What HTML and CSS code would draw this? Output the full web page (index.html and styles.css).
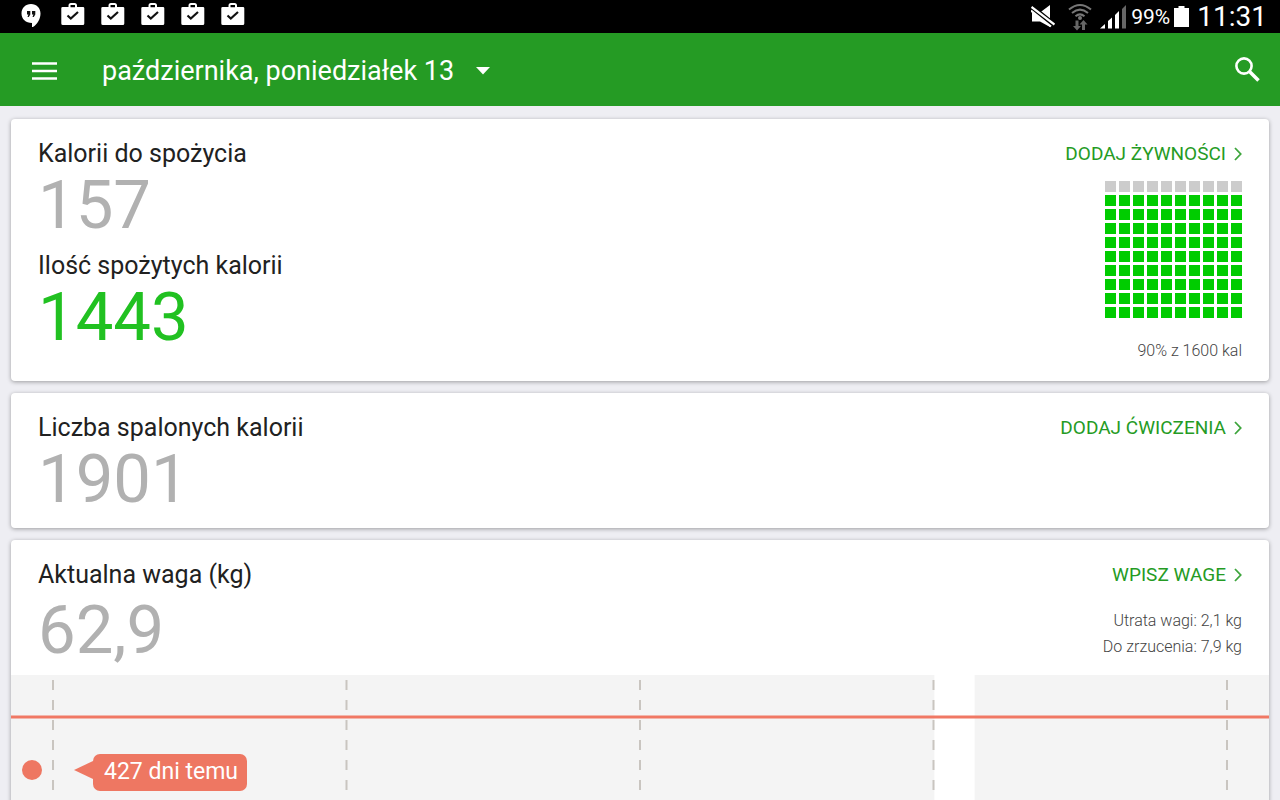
FILE: index.html
```
<!DOCTYPE html>
<html lang="pl">

<head>
    <meta charset="utf-8">
    <meta name="viewport" content="width=device-width, initial-scale=1">
    <title>Dziennik kalorii</title>
    <link rel="stylesheet" href="styles.css">
</head>

<body>
    <svg class="defs" width="0" height="0" aria-hidden="true">
        <symbol id="bag" viewBox="0 0 24 24">
            <path fill="#fff" fill-rule="evenodd" d="M7.500 4V2.500Q7.500 0 10 0H13.500Q16 0 16 2.500V4H22Q23.300 4 23.300 5.300V20.500Q23.300 22 21.800 22H1.800Q.300 22 .300 20.500V5.300Q.300 4 1.600 4ZM9.500 4.200H14V2H9.500Z"/>
            <path fill="none" stroke="#111" stroke-width="2.200" d="M6.500 12.500L9.800 15.500L17 9"/>
        </symbol>
        <symbol id="chevron" viewBox="0 0 8 14">
            <path fill="none" stroke="#3da53c" stroke-width="1.800" d="M1 1L6.700 7L1 13"/>
        </symbol>
    </svg>

    <div class="status-bar">
        <div class="notifications">
            <svg width="20" height="24" viewBox="0 0 20 24">
                <path fill="#fff" d="M10 1C4.500 1 .500 5 .500 10.500S4.700 20 11 20V24.500C16 22 19.500 16.500 19.500 10.500C19.500 5 15.500 1 10 1Z"/>
                <path fill="#111" d="M6 8H9.300V11.500L7.800 14H6.500L7.400 11.500H6ZM11 8H14.300V11.500L12.800 14H11.500L12.400 11.500H11Z"/>
            </svg>
            <svg width="24" height="24"><use href="#bag"/></svg>
            <svg width="24" height="24"><use href="#bag"/></svg>
            <svg width="24" height="24"><use href="#bag"/></svg>
            <svg width="24" height="24"><use href="#bag"/></svg>
            <svg width="24" height="24"><use href="#bag"/></svg>
        </div>
        <div class="system">
            <svg class="mute" width="24" height="24" viewBox="0 0 24 24">
                <path fill="#fff" d="M1 7.500H9L19 0V22L9 16.500H1Z"/>
                <path stroke="#000" stroke-width="6" d="M0 2L24 21"/>
                <path stroke="#fff" stroke-width="2.200" d="M.500 2L23.500 19.500M0 5.500L20 21.500"/>
            </svg>
            <svg class="wifi" width="26" height="28" viewBox="0 0 26 28">
                <path fill="none" stroke="#777" stroke-width="2" d="M2 6.500Q13 -2.500 24 6.500M5 10Q13 3.300 21 10M8.500 13.300Q13 9.500 17.500 13.300"/>
                <circle cx="13" cy="15" r="2" fill="#777"/>
                <path fill="#666" d="M8.500 17.500H11.500V23H14L10 27.500L6 23H8.500ZM15 27V21.500H12.500L16.500 17L20.500 21.500H18V27Z"/>
            </svg>
            <svg class="signal" width="27" height="24" viewBox="0 0 27 24">
                <path fill="#fff" d="M0 23.500L5 19V23.500ZM8 23.500V16L12 12.500V23.500ZM15 23.500V10L19 6V23.500Z"/>
                <path fill="#666" d="M22 23.500V4L26 0V23.500Z"/>
            </svg>
            <span class="charge">99%</span>
            <svg class="battery" width="15" height="22" viewBox="0 0 15 22">
                <path fill="#fff" d="M0 2H4.500V0H10.500V2H15V21H0Z"/>
            </svg>
            <span class="clock">11:31</span>
        </div>
    </div>

    <header class="app-bar">
        <button class="icon-button" type="button" aria-label="Menu">
            <svg width="26" height="18" viewBox="0 0 26 18">
                <path stroke="#fff" stroke-width="2.600" d="M0 1.500H25M0 9H25M0 16.500H25"/>
            </svg>
        </button>
        <button class="date-button" type="button">
            października, poniedziałek 13
            <svg width="14" height="8" viewBox="0 0 14 8"><path fill="#fff" d="M0 0H14L7 7.500Z"/></svg>
        </button>
        <button class="icon-button search" type="button" aria-label="Szukaj">
            <svg width="26" height="26" viewBox="0 0 26 26">
                <circle cx="10" cy="10" r="7.600" fill="none" stroke="#fff" stroke-width="2.600"/>
                <path stroke="#fff" stroke-width="3.600" d="M15.500 15.500L24.500 24.500"/>
            </svg>
        </button>
    </header>

    <main class="content">
        <section class="card">
            <div class="card-row">
                <div class="figures">
                    <div>
                        <h2>Kalorii do spożycia</h2>
                        <p class="number">157</p>
                    </div>
                    <div>
                        <h2>Ilość spożytych kalorii</h2>
                        <p class="number eaten">1443</p>
                    </div>
                </div>
                <div class="side">
                    <a class="action" href="#food">DODAJ ŻYWNOŚCI <svg width="8" height="14"><use href="#chevron"/></svg></a>
                    <div class="meter" id="meter"></div>
                    <p class="note">90% z 1600 kal</p>
                </div>
            </div>
        </section>

        <section class="card">
            <div class="card-row">
                <div class="figures">
                    <div>
                        <h2>Liczba spalonych kalorii</h2>
                        <p class="number">1901</p>
                    </div>
                </div>
                <div class="side">
                    <a class="action" href="#exercise">DODAJ ĆWICZENIA <svg width="8" height="14"><use href="#chevron"/></svg></a>
                </div>
            </div>
        </section>

        <section class="card">
            <div class="card-row weight">
                <div class="figures">
                    <div>
                        <h2>Aktualna waga (kg)</h2>
                        <p class="number">62,9</p>
                    </div>
                </div>
                <div class="side">
                    <a class="action" href="#weight">WPISZ WAGE <svg width="8" height="14"><use href="#chevron"/></svg></a>
                    <div class="progress">
                        <p>Utrata wagi: 2,1 kg</p>
                        <p>Do zrzucenia: 7,9 kg</p>
                    </div>
                </div>
            </div>
            <div class="chart">
                <svg width="100%" height="100%">
                    <rect class="band" x="0" y="0" width="73.400%" height="100%"/>
                    <rect class="band" x="76.600%" y="0" width="23.400%" height="100%"/>
                    <g class="guides">
                        <line x1="3.340%" x2="3.340%" y1="5" y2="100%"/>
                        <line x1="26.670%" x2="26.670%" y1="5" y2="100%"/>
                        <line x1="50%" x2="50%" y1="5" y2="100%"/>
                        <line x1="73.330%" x2="73.330%" y1="5" y2="100%"/>
                        <line x1="96.660%" x2="96.660%" y1="5" y2="100%"/>
                    </g>
                    <line class="goal" x1="0" x2="100%" y1="42" y2="42"/>
                    <circle class="point" cx="21" cy="95" r="10"/>
                </svg>
                <span class="bubble">427 dni temu</span>
            </div>
        </section>
    </main>

    <script>
        // one square per percent, filled from the bottom
        var percent = 90;
        var meter = document.getElementById("meter");
        for (var i = 0; i < 100; i++) {
            var square = document.createElement("i");
            if (i >= 100 - percent)
                square.className = "full";
            meter.appendChild(square);
        }
    </script>
</body>

</html>
```
FILE: styles.css
```
* {
    box-sizing: border-box;
}

body {
    display: flex;
    flex-direction: column;
    height: 100vh;
    margin: 0;
    background: #eeeef3;
    color: #212121;
    font-family: Roboto, "Noto Sans", sans-serif;
}

h2, p {
    margin: 0;
}

svg {
    display: block;
    flex: none;
}

button {
    padding: 0;
    border: none;
    background: none;
    color: inherit;
    font: inherit;
    cursor: pointer;
}

.defs {
    position: absolute;
}

/* status bar */
.status-bar {
    display: flex;
    flex: none;
    justify-content: space-between;
    height: 33px;
    padding: 0 13px 0 21px;
    background: #000;
    color: #fff;
}

.notifications {
    display: flex;
    gap: 16px;
    padding-top: 3px;
}

.notifications svg:first-child {
    margin-right: 4px;
}

.system {
    display: flex;
    align-items: center;
}

.wifi {
    margin: 0 7px 0 12px;
}

.charge {
    margin: 0 4px;
    font-size: 21px;
}

.clock {
    margin-left: 8px;
    font-size: 28px;
    line-height: 32px;
}

/* app bar */
.app-bar {
    display: flex;
    flex: none;
    align-items: center;
    height: 73px;
    padding: 2px 20px 0 32px;
    background: #259b24;
    color: #fff;
}

.date-button {
    display: flex;
    align-items: center;
    gap: 22px;
    margin-left: 44px;
    font-size: 27px;
}

.search {
    margin: 0 0 4px auto;
}

/* cards */
.content {
    display: flex;
    flex: 1;
    flex-direction: column;
    gap: 12px;
    min-height: 0;
    padding: 13px 11px 12px;
    overflow-y: auto;
    scrollbar-width: none;
}

.card {
    flex: none;
    border-radius: 4px;
    background: #fff;
    box-shadow: 0 1px 4px rgba(0, 0, 0, 0.35);
    overflow: hidden;
}

.card-row {
    display: flex;
    justify-content: space-between;
    padding: 17px 27px 16px;
}

.figures {
    display: flex;
    flex-direction: column;
    gap: 10px;
}

h2 {
    font-size: 25px;
    font-weight: 400;
    line-height: 36px;
}

.number {
    color: #b1b1b1;
    font-size: 67px;
    line-height: 66px;
}

.eaten {
    color: #21c121;
}

.side {
    display: flex;
    flex-direction: column;
    align-items: flex-end;
    color: #444;
    font-size: 16px;
    font-weight: 300;
    line-height: 26px;
    text-align: right;
}

.action {
    display: flex;
    align-items: center;
    gap: 8px;
    color: #259b24;
    font-size: 19px;
    font-weight: 400;
    line-height: 36px;
    text-decoration: none;
}

.meter {
    display: grid;
    grid-template-columns: repeat(10, 11px);
    grid-auto-rows: 11px;
    gap: 3px;
    margin-top: 9px;
}

.meter i {
    background: #ccc;
}

.meter .full {
    background: #00cc00;
}

.note {
    margin: 20px 0 1px;
}

.weight {
    padding-bottom: 12px;
}

.weight .number {
    margin-top: 4px;
}

.progress {
    margin-top: 15px;
}

/* weight chart */
.chart {
    position: relative;
    height: 320px;
}

.band {
    fill: #f4f4f4;
}

.guides {
    stroke: #c9c5c0;
    stroke-width: 2;
    stroke-dasharray: 10 10;
}

.goal {
    stroke: #f07864;
    stroke-width: 3;
}

.point {
    fill: #ee7762;
}

.bubble {
    position: absolute;
    top: 79px;
    left: 82px;
    padding: 0 9px 2px 11px;
    border-radius: 7px;
    background: #ee7762;
    color: #fff;
    font-size: 23px;
    line-height: 35px;
}

.bubble::before {
    content: "";
    position: absolute;
    top: 7px;
    right: 100%;
    border: 9px solid transparent;
    border-right: 19px solid #ee7762;
    border-left: 0;
}
```
